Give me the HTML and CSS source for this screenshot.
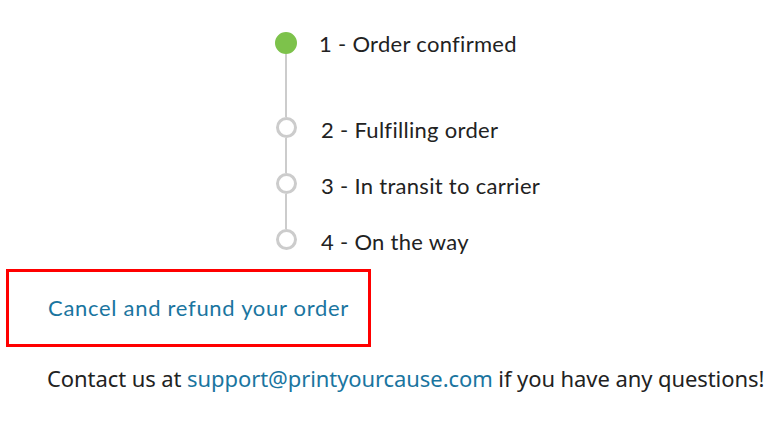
FILE: index.html
```html
<!DOCTYPE html>
<html>
<head>
<meta charset="utf-8">
<link rel="stylesheet" href="styles.css">
</head>
<body>
<div class="page">
  <ol class="steps">
    <li class="step done tall">
      <div class="rail"><span class="dot"></span><span class="line"></span></div>
      <span class="label">1 - Order confirmed</span>
    </li>
    <li class="step">
      <div class="rail"><span class="dot"></span><span class="line"></span></div>
      <span class="label">2 - Fulfilling order</span>
    </li>
    <li class="step">
      <div class="rail"><span class="dot"></span><span class="line"></span></div>
      <span class="label">3 - In transit to carrier</span>
    </li>
    <li class="step last">
      <div class="rail"><span class="dot"></span></div>
      <span class="label">4 - On the way</span>
    </li>
  </ol>
  <div class="cancel-box">
    <a class="link cancel" href="#">Cancel and refund your order</a>
  </div>
  <p class="contact">Contact us at <a class="link" href="#">support@printyourcause.com</a> if you have any questions!</p>
</div>
</body>
</html>
```
FILE: styles.css
```css
html, body { margin: 0; padding: 0; background: #fff; }
.page { width: 769px; height: 431px; overflow: hidden; }
.steps { list-style: none; margin: 0; padding: 32px 0 0 275px; }
.step { display: flex; align-items: flex-start; height: 56px; }
.step.tall { height: 85px; }
.step.last { height: 30px; }
.rail { width: 22px; display: flex; flex-direction: column; align-items: center; align-self: stretch; }
.dot { box-sizing: border-box; width: 22px; height: 22px; border-radius: 50%; border: 3px solid #cccccc; background: #fff; flex: none; }
.step:not(.done) .dot { width: 21px; height: 21px; }
.done .dot { background: #7dc24b; border-color: #7dc24b; }
.line { flex: 1; width: 2px; background: #cccccc; }
.label { font-family: Lato, "Open Sans", sans-serif; font-size: 22px; letter-spacing: 0.3px; color: #222; margin-left: 24px; line-height: 22px; margin-top: 1px; }
.step:not(.done) .label { margin-top: 2px; }
.done .label { margin-left: 22px; }
.cancel-box { box-sizing: border-box; margin: 10px 0 0 6px; width: 365px; height: 78px; border: 3px solid #ff0000; padding: 25px 0 0 39px; line-height: 22px; }
.link { color: #1a75a0; text-decoration: none; }
.cancel { font-family: Lato, "Open Sans", sans-serif; font-size: 22px; letter-spacing: 0.7px; }
.contact { font-family: "Noto Sans", sans-serif; font-size: 22px; line-height: 26px; color: #222; margin: 18px 0 0 47px; white-space: nowrap; letter-spacing: -0.08px; }
```
